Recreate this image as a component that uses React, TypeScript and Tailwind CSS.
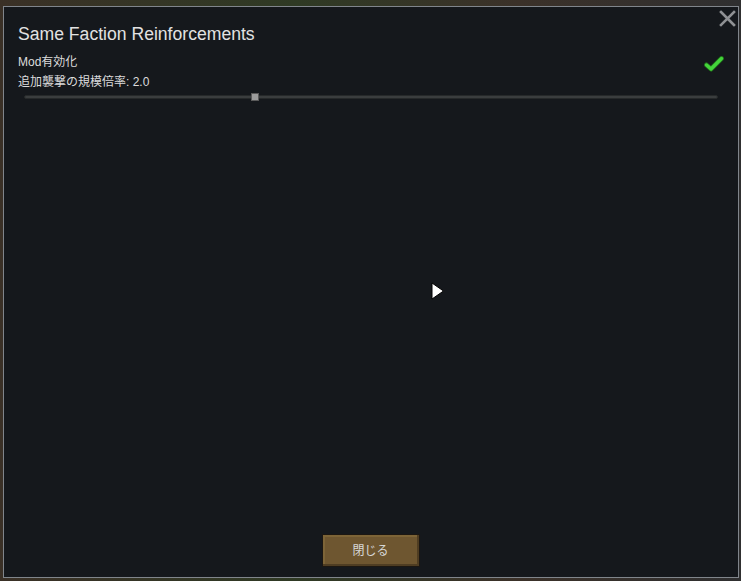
import React from "react";

const font = { fontFamily: '"Liberation Sans", "Noto Sans CJK JP", sans-serif' };

export default function App() {
  return (
    <div
      className="relative w-[741px] h-[581px] overflow-hidden bg-[linear-gradient(90deg,#3a3026_0%,#2f3a24_40%,#3b3129_70%,#2f2f30_100%)] pt-[6px] pl-[3px]"
      style={font}
    >
      <div className="relative flex flex-col w-[736px] h-[572px] border border-[#80858b] bg-[#15181c]">
        {/* Close */}
        <button className="absolute right-[2px] top-[3px] w-[17px] h-[17px]" aria-label="Close">
          <svg viewBox="0 0 17 17" className="w-[17px] h-[17px]">
            <path d="M2 2 L15 15 M15 2 L2 15" stroke="#8f9194" strokeWidth={2.6} strokeLinecap="square" />
          </svg>
        </button>

        <div className="px-[14px] pt-[16px]">
          <h1 className="text-[17.6px] leading-[22px] text-[#e2e2e2]">Same Faction Reinforcements</h1>

          <div className="flex items-center justify-between mt-[7px] h-[20px]">
            <span className="text-[12px] text-[#dcdcdc]">Mod有効化</span>
            <svg viewBox="0 0 20 16" className="w-[20px] h-[16px] mt-[3px]">
              <path d="M2.5 9 L7 13 L17.5 2.5" fill="none" stroke="#1f6b1a" strokeWidth={5} strokeLinecap="round" strokeLinejoin="round" />
              <path d="M2.5 9 L7 13 L17.5 2.5" fill="none" stroke="#44d43b" strokeWidth={3.4} strokeLinecap="round" strokeLinejoin="round" />
            </svg>
          </div>

          <div className="h-[20px] flex items-center text-[12px] text-[#dcdcdc]">追加襲撃の規模倍率: 2.0</div>

          {/* Slider */}
          <div className="relative ml-[6px] mr-[6px] h-[10px] flex items-center">
            <div className="w-full h-[4px] rounded-full bg-[#3a3d3e] border border-[#26292a]" />
            <div className="absolute left-[227px] top-[1px] w-[8px] h-[8px] bg-[#9c9c9c] border border-[#5a5a5a]" />
          </div>
        </div>

        <div className="flex-1" />

        <div className="flex justify-center pb-[10px]">
          <button className="w-[98px] h-[33px] mr-[1px] bg-[#6e5630] border border-[#1c1712] shadow-[inset_-2px_-2px_0_#4f3d22,inset_2px_2px_0_#7d6437] text-[12px] text-[#d8d8d8]">
            閉じる
          </button>
        </div>

        {/* Mouse cursor */}
        <svg viewBox="0 0 14 20" className="absolute left-[427px] top-[275px] w-[14px] h-[20px]">
          <path d="M1 1 L1 17 L12.5 9 Z" fill="#ffffff" stroke="#000000" strokeWidth={1} strokeLinejoin="round" />
        </svg>
      </div>
    </div>
  );
}
